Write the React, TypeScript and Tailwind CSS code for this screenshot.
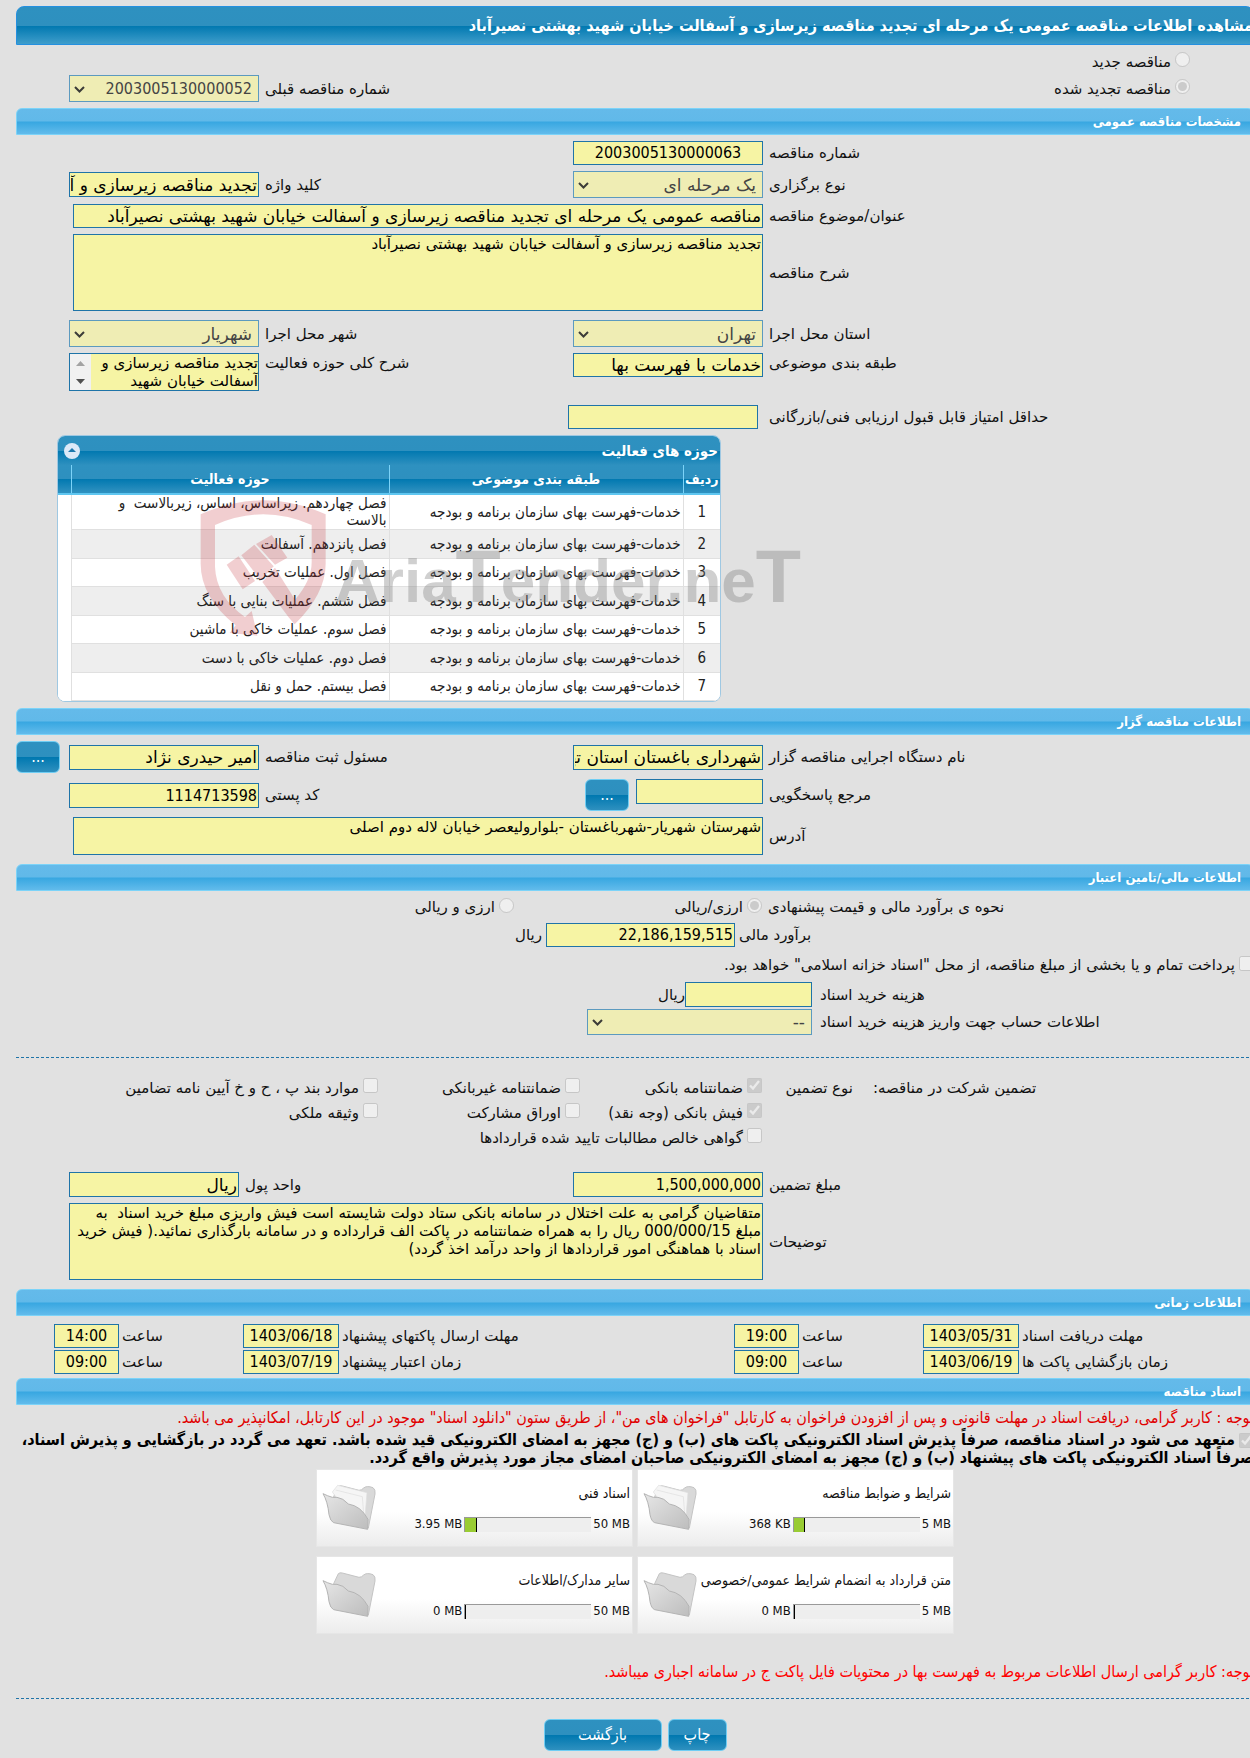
import type { ReactNode } from "react";

const titleGrad = "bg-[linear-gradient(to_bottom,#2e91c0_0%,#2e90bf_50%,#0078b0_51%,#3f9dcb_100%)]";
const headGrad  = "bg-[linear-gradient(to_bottom,#2e91c0_0%,#2e90bf_50%,#0078b0_51%,#2e90bf_100%)]";
const barGrad   = "bg-[linear-gradient(to_bottom,#64baea_0%,#61b9e9_48%,#38a7e1_52%,#62bbeb_100%)]";

const wide      = "font-['DejaVu_Sans',sans-serif]";
const condensed = "font-['DejaVu_Sans_Condensed','DejaVu_Sans',sans-serif]";

const fieldBase = "block w-full rounded-none border border-[#1f74a8] bg-[#f6f4a4] px-px text-black outline-none";
const formGrid  = "grid grid-cols-[1fr_190px_302px_190px] items-center gap-x-1.5 pl-[69px]";
const moneyGrid = "grid grid-cols-[1fr_225px_563px] items-center gap-x-2 pl-4";

type FieldProps = { id: string; value?: string; className?: string; digits?: boolean };

function Label({ id, children }: { id: string; children: ReactNode }) {
  return <label htmlFor={id} className="text-end whitespace-nowrap">{children}</label>;
}

function TextField({ id, value = "", className = "h-[25px]", digits = false }: FieldProps) {
  return (
    <input id={id} type="text" readOnly defaultValue={value} dir={digits ? "ltr" : "rtl"}
      className={`${fieldBase} ${digits ? `text-right text-base ${condensed}` : `text-[17px] ${wide}`} ${className}`} />
  );
}

function CenteredField({ id, value }: FieldProps) {
  return (
    <input id={id} type="text" readOnly defaultValue={value} dir="ltr"
      className={`${fieldBase} h-6 text-center text-base ${condensed}`} />
  );
}

function TextArea({ id, value = "", className = "" }: FieldProps) {
  return (
    <textarea id={id} readOnly defaultValue={value}
      className={`${fieldBase} resize-none overflow-hidden text-[15px] leading-[18px] ${className}`} />
  );
}

function SelectField({ id, value = "", className = "h-[27px]", digits = false }: FieldProps) {
  return (
    <div className="relative">
      <select id={id} disabled defaultValue={value}
        className={`block w-full appearance-none rounded-none border border-[#5c9abf] bg-[#efedb4] ps-1.5 pe-6 text-[#444] ${digits ? `text-base ${condensed}` : `text-[17px] ${wide}`} ${className}`}>
        <option value={value}>{value}</option>
      </select>
      <svg className="pointer-events-none absolute top-1/2 left-1 -translate-y-1/2" width="13" height="13" viewBox="0 0 13 13"
        fill="none" stroke="#3c3c38" strokeWidth="2">
        <path d="M2 4.5 L6.5 9 L11 4.5" />
      </svg>
    </div>
  );
}

function Tick({ type, name, id, label, checked = false, className = "" }: {
  type: "radio" | "checkbox"; name?: string; id: string; label: string; checked?: boolean; className?: string;
}) {
  return (
    <div className={`flex items-center gap-1 whitespace-nowrap ${className}`}>
      <input id={id} name={name} type={type} disabled defaultChecked={checked} className="mb-1 size-[15px] shrink-0" />
      <label htmlFor={id}>{label}</label>
    </div>
  );
}

function SectionBar({ title }: { title: string }) {
  return (
    <h2 className={`ml-4 flex h-[27px] items-center rounded-t-md border border-[#7cd3f8] px-3 text-[13px] font-bold text-white ${condensed} ${barGrad}`}>
      {title}
    </h2>
  );
}

function BlueButton({ children, label, className = "" }: { children: ReactNode; label?: string; className?: string }) {
  return (
    <button type="button" aria-label={label}
      className={`h-8 rounded-md border border-[#6fcdf3] text-base text-white ${condensed} ${headGrad} ${className}`}>
      {children}
    </button>
  );
}

const activities = [
  "فصل چهاردهم. زیراساس، اساس، زیربالاست  و بالاست",
  "فصل پانزدهم. آسفالت",
  "فصل اول. عملیات تخریب",
  "فصل ششم. عملیات بنایی با سنگ",
  "فصل سوم. عملیات خاکی با ماشین",
  "فصل دوم. عملیات خاکی با دست",
  "فصل بیستم. حمل و نقل",
];

function Watermark() {
  return (
    <div className="pointer-events-none absolute top-[62px] left-[142px] flex items-start" dir="ltr" aria-hidden="true">
      <svg width="128" height="139" viewBox="0 0 384 417" fill="#c4343c" fillOpacity="0.24">
        <path d="M5 52 Q192 -32 380 52 V200 Q380 290 287 382 L270 362 L190 255 L228 212 L288 308 Q338 250 338 195 V84 Q192 20 48 84 V210 Q52 300 138 360 L158 342 L175 416 L92 408 L110 385 Q5 300 5 200 Z" />
        <path d="M83 203 L119 178 L168 252 L131 277 Z" />
        <path d="M127 175 L166 143 L224 208 L185 250 Z" />
        <path d="M171 141 L218 114 L265 182 L228 203 Z" />
      </svg>
      <span className="mt-8 ml-2 font-['Liberation_Sans',sans-serif] text-[62px] leading-[96px] font-bold whitespace-nowrap text-[#777]/35">
        Aria<span className="text-[74px]">T</span>ender.ne<span className="text-[74px]">T</span>
      </span>
    </div>
  );
}

function ActivityTable() {
  return (
    <div className={`relative mr-[533px] ml-[57px] ${condensed}`}>
      <div className="overflow-hidden rounded-lg border border-[#9fc8e2] bg-white">
        <div className={`flex h-[29px] items-center justify-between pr-0.5 pl-1.5 ${headGrad}`}>
          <h3 className="text-[15px] font-bold text-white">حوزه های فعالیت</h3>
          <button type="button" aria-label="بستن" className="flex size-4 items-center justify-center rounded-full bg-[#dce9f8]">
            <svg width="8" height="5" viewBox="0 0 8 5" fill="#1d78ad"><path d="M4 0 L8 4 H0 Z" /></svg>
          </button>
        </div>
        <table className="w-full table-fixed border-collapse">
          <thead>
            <tr className={`h-[29px] border-b-2 border-[#5fc6f0] text-[14px] text-white ${headGrad}`}>
              <th className="w-[37px]">ردیف</th>
              <th className="w-[294px] border-r border-[#7cd3f8]">طبقه بندی موضوعی</th>
              <th className="border-r border-[#7cd3f8]">حوزه فعالیت</th>
              <th className="w-[13px] border-r border-[#7cd3f8]" aria-label="فاصله" />
            </tr>
          </thead>
          <tbody>
            {activities.map((name, i) => (
              <tr key={name} className={`text-[15px] leading-[17px] text-[#222] ${i === 0 ? "h-[35px]" : i % 2 ? "h-[29px]" : "h-[28px]"} ${i % 2 ? "bg-[#eee]" : "bg-white"}`}>
                <td className="border-b border-[#e0e0e0] text-center">{i + 1}</td>
                <td className="border-r border-b border-[#e0e0e0] pr-0.5 whitespace-nowrap">خدمات-فهرست بهای سازمان برنامه و بودجه</td>
                <td className="border-r border-b border-[#e0e0e0] pr-0.5 pl-6 whitespace-pre-wrap">{name}</td>
                <td className="border-r border-[#e0e0e0] bg-white" />
              </tr>
            ))}
          </tbody>
        </table>
      </div>
      <Watermark />
    </div>
  );
}

function Folder({ filled }: { filled: boolean }) {
  return (
    <svg width="57" height="52" viewBox="0 0 171 156" strokeLinejoin="round">
      <defs>
        <linearGradient id="folderFace" x1="0" y1="0" x2="1" y2="1">
          <stop offset="0" stopColor="#e6e6e6" />
          <stop offset="1" stopColor="#bdbdbd" />
        </linearGradient>
      </defs>
      <path d="M38 44 L52 14 Q56 10 64 12 L114 25 Q122 25 128 18 Q138 10 156 17 Q164 22 162 36 L142 138 L60 80 Z"
        fill="#d9d9d9" stroke="#c4c4c4" strokeWidth="3" />
      {filled && (
        <>
          <path d="M34 30 L50 10 L138 32 L132 104 L60 66 Z" fill="#f5f5f5" stroke="#dedede" strokeWidth="2" />
          <path d="M44 24 L124 44 L128 96" fill="none" stroke="#dedede" strokeWidth="2" />
        </>
      )}
      <path d="M6 35 Q20 42 34 46 L48 46 Q66 48 82 66 Q120 72 141 112 L140 142 L38 122 Q28 118 24 98 Q20 58 6 35 Z"
        fill="url(#folderFace)" stroke="#b4b4b4" strokeWidth="3" />
    </svg>
  );
}

const docs = [
  { title: "شرایط و ضوابط مناقصه",                 used: "368 KB",  max: "5 MB",  pct: 9 },
  { title: "اسناد فنی",                            used: "3.95 MB", max: "50 MB", pct: 9 },
  { title: "متن قرارداد به انضمام شرایط عمومی/خصوصی", used: "0 MB",    max: "5 MB",  pct: 0 },
  { title: "سایر مدارک/اطلاعات",                   used: "0 MB",    max: "50 MB", pct: 0 },
];

function DocCard({ title, used, max, pct }: (typeof docs)[number]) {
  return (
    <div className={`flex h-[78px] items-center justify-between border border-[#e6e6e6] bg-[linear-gradient(to_bottom,#fff_55%,#ececec)] pr-0.5 pl-1 ${condensed}`}>
      <div className="flex flex-col gap-3 text-[13px]">
        <span className="text-[14px] leading-5 whitespace-nowrap">{title}</span>
        <div className="flex items-center gap-0.5 leading-[18px]">
          <span dir="ltr">{max}</span>
          <div dir="ltr" className="h-[15px] w-[127px] border-t border-l border-[#999] bg-[#eee]">
            <div className="h-full border-r border-black bg-[#99cc33]" style={{ width: `${pct}%` }} />
          </div>
          <span dir="ltr">{used}</span>
        </div>
      </div>
      <Folder filled={pct > 0} />
    </div>
  );
}

const dates = [
  ["مهلت دریافت اسناد", "1403/05/31", "19:00", "مهلت ارسال پاکتهای پیشنهاد", "1403/06/18", "14:00"],
  ["زمان بازگشایی پاکت ها", "1403/06/19", "09:00", "زمان اعتبار پیشنهاد", "1403/07/19", "09:00"],
];

export default function App() {
  return (
    <div dir="rtl" className={`min-h-screen overflow-hidden bg-[#e1e1e1] text-[15px] leading-5 text-[#111] ${wide}`}>
      <main className="-mr-1 pt-1.5 pb-2">
        <h1 className={`ml-4 flex h-[39px] items-center rounded-t-lg border border-[#2490e0] text-base font-bold whitespace-nowrap text-white ${condensed} ${titleGrad}`}>
          مشاهده اطلاعات مناقصه عمومی یک مرحله ای تجدید مناقصه زیرسازی و آسفالت خیابان شهید بهشتی نصیرآباد
        </h1>

        <div className="pt-[3px] pb-1.5">
          <Tick type="radio" name="kind" id="kindNew" label="مناقصه جدید" className="h-[27px] pr-16" />
          <div className="grid grid-cols-[1fr_190px] items-center gap-x-1.5 pl-[69px]">
            <div className="flex items-center justify-between">
              <Tick type="radio" name="kind" id="kindRenewed" label="مناقصه تجدید شده" checked className="pr-16" />
              <Label id="prevNo">شماره مناقصه قبلی</Label>
            </div>
            <SelectField id="prevNo" value="2003005130000052" digits />
          </div>
        </div>

        {/* Tender details */}
        <SectionBar title="مشخصات مناقصه عمومی" />
        <div className="flex flex-col gap-1.5 py-1.5">
          <div className={formGrid}>
            <Label id="tenderNo">شماره مناقصه</Label>
            <CenteredField id="tenderNo" value="2003005130000063" />
          </div>
          <div className={formGrid}>
            <Label id="method">نوع برگزاری</Label>
            <SelectField id="method" value="یک مرحله ای" />
            <Label id="keyword">کلید واژه</Label>
            <TextField id="keyword" value="تجدید مناقصه زیرسازی و آسفالت خیابان شهید بهشتی" />
          </div>
          <div className={formGrid}>
            <Label id="subject">عنوان/موضوع مناقصه</Label>
            <div className="col-span-3 pl-1">
              <TextField id="subject" className="h-6"
                value="مناقصه عمومی یک مرحله ای تجدید مناقصه زیرسازی و آسفالت خیابان شهید بهشتی نصیرآباد" />
            </div>
          </div>
          <div className={formGrid}>
            <Label id="desc">شرح مناقصه</Label>
            <div className="col-span-3 pl-1">
              <TextArea id="desc" className="h-[77px]" value="تجدید مناقصه زیرسازی و آسفالت خیابان شهید بهشتی نصیرآباد" />
            </div>
          </div>
          <div className={`${formGrid} pt-[3px]`}>
            <Label id="province">استان محل اجرا</Label>
            <SelectField id="province" value="تهران" />
            <Label id="city">شهر محل اجرا</Label>
            <SelectField id="city" value="شهریار" />
          </div>
          <div className="grid grid-cols-[1fr_190px_302px_190px] items-start gap-x-1.5 pl-[69px]">
            <Label id="category">طبقه بندی موضوعی</Label>
            <TextField id="category" value="خدمات با فهرست بها" className="h-6" />
            <Label id="scope">شرح کلی حوزه فعالیت</Label>
            <div className="flex h-[38px] border border-[#1f74a8] bg-[#f6f4a4]">
              <textarea id="scope" readOnly defaultValue="تجدید مناقصه زیرسازی و آسفالت خیابان شهید بهشتی"
                className="block h-full min-w-0 flex-1 resize-none overflow-hidden bg-transparent text-[15px] leading-[18px] text-black outline-none" />
              <div className="flex w-[21px] flex-col items-center justify-around bg-[#f1f1f1]">
                <svg width="9" height="5" viewBox="0 0 9 5" fill="#a3a3a3"><path d="M0 5 L4.5 0 L9 5 Z" /></svg>
                <svg width="9" height="5" viewBox="0 0 9 5" fill="#505050"><path d="M0 0 L4.5 5 L9 0 Z" /></svg>
              </div>
            </div>
          </div>
          <div className="grid grid-cols-[1fr_190px] items-center gap-x-[11px] pt-2 pl-[568px]">
            <Label id="minScore">حداقل امتیاز قابل قبول ارزیابی فنی/بازرگانی</Label>
            <TextField id="minScore" className="h-6" />
          </div>
          <ActivityTable />
        </div>

        {/* Tender holder */}
        <SectionBar title="اطلاعات مناقصه گزار" />
        <div className="flex flex-col gap-1.5 pt-1.5 pb-[9px]">
          <div className="grid grid-cols-[1fr_190px_302px_190px_47px] items-center gap-x-1.5 pl-4">
            <Label id="agency">نام دستگاه اجرایی مناقصه گزار</Label>
            <TextField id="agency" value="شهرداری باغستان استان تهران" />
            <Label id="registrar">مسئول ثبت مناقصه</Label>
            <TextField id="registrar" value="امیر حیدری نژاد" />
            <BlueButton label="جستجوی مسئول" className="w-11 justify-self-end">...</BlueButton>
          </div>
          <div className={formGrid}>
            <Label id="contact">مرجع پاسخگویی</Label>
            <div className="flex gap-[7px]">
              <TextField id="contact" className="h-[25px] max-w-[127px]" />
              <BlueButton label="جستجوی مرجع" className="w-11 shrink-0">...</BlueButton>
            </div>
            <Label id="postal">کد پستی</Label>
            <TextField id="postal" value="1114713598" digits />
          </div>
          <div className={formGrid}>
            <Label id="address">آدرس</Label>
            <div className="col-span-3 pl-1">
              <TextArea id="address" className="h-[38px]" value="شهرستان شهریار-شهرباغستان -بلوارولیعصر خیابان لاله دوم اصلی" />
            </div>
          </div>
        </div>

        {/* Finance */}
        <SectionBar title="اطلاعات مالی/تامین اعتبار" />
        <div className="pt-[5px]">
          <div className="grid h-[22px] grid-cols-[1fr_242px_514px] items-center gap-x-1.5">
            <span className="text-end">نحوه ی برآورد مالی و قیمت پیشنهادی</span>
            <Tick type="radio" name="currency" id="curOne" label="ارزی/ریالی" checked />
            <Tick type="radio" name="currency" id="curBoth" label="ارزی و ریالی" />
          </div>
          <div className="mt-[5px] grid grid-cols-[1fr_189px_526px] items-center gap-x-1 pl-4">
            <Label id="estimate">برآورد مالی</Label>
            <TextField id="estimate" value="22,186,159,515" digits className="h-6" />
            <span>ریال</span>
          </div>
          <Tick type="checkbox" id="treasury" className="mt-2 h-5"
            label={'پرداخت تمام و یا بخشی از مبلغ مناقصه، از محل "اسناد خزانه اسلامی" خواهد بود.'} />
          <div className={`${moneyGrid} mt-[7px]`}>
            <Label id="docFee">هزینه خرید اسناد</Label>
            <div className="flex items-center">
              <TextField id="docFee" className="h-[25px] max-w-[127px]" />
              <span>ریال</span>
            </div>
          </div>
          <div className={`${moneyGrid} mt-0.5`}>
            <Label id="account">اطلاعات حساب جهت واریز هزینه خرید اسناد</Label>
            <SelectField id="account" value="--" className="h-[26px]" />
          </div>
        </div>

        <hr className="mt-[22px] ml-4 border-t border-dashed border-[#1f74a8]" />

        <div className="grid grid-cols-[1fr_91px_182px_202px_378px] items-center pt-[17px]">
          <span className="pl-5 text-end">تضمین شرکت در مناقصه:</span>
          <span className="whitespace-nowrap">نوع تضمین</span>
          <Tick type="checkbox" id="g1" label="ضمانتنامه بانکی" checked className="h-[25px]" />
          <Tick type="checkbox" id="g2" label="ضمانتنامه غیربانکی" />
          <Tick type="checkbox" id="g3" label="موارد بند پ ، ح و خ آیین نامه تضامین" />
          <Tick type="checkbox" id="g4" label="فیش بانکی (وجه نقد)" checked className="col-start-3 h-[25px]" />
          <Tick type="checkbox" id="g5" label="اوراق مشارکت" />
          <Tick type="checkbox" id="g6" label="وثیقه ملکی" />
          <Tick type="checkbox" id="g7" label="گواهی خالص مطالبات تایید شده قراردادها" className="col-span-2 col-start-3 h-[25px]" />
        </div>

        <div className="flex flex-col gap-1.5 pt-[22px] pb-[9px]">
          <div className="grid grid-cols-[1fr_190px_322px_170px] items-center gap-x-1.5 pl-[69px]">
            <Label id="amount">مبلغ تضمین</Label>
            <TextField id="amount" value="1,500,000,000" digits />
            <Label id="unit">واحد پول</Label>
            <TextField id="unit" value="ریال" />
          </div>
          <div className={formGrid}>
            <Label id="notes">توضیحات</Label>
            <TextArea id="notes" className="col-span-3 h-[77px]"
              value="متقاضیان گرامی به علت اختلال در سامانه بانکی ستاد دولت شایسته است فیش واریزی مبلغ خرید اسناد  به مبلغ 000/000/15 ریال را به همراه ضمانتنامه در پاکت الف قرارداده و در سامانه بارگذاری نمائید.( فیش خرید اسناد با هماهنگی امور قراردادها از واحد درآمد اخذ گردد)" />
          </div>
        </div>

        {/* Schedule */}
        <SectionBar title="اطلاعات زمانی" />
        <div className="flex flex-col gap-0.5 pt-2 pb-1">
          {dates.map(([l1, d1, t1, l2, d2, t2], i) => (
            <div key={i} className="grid grid-cols-[1fr_96px_118px_65px_389px_96px_118px_65px] items-center gap-x-[3px] pl-[54px]">
              <Label id={`dateA${i}`}>{l1}</Label>
              <CenteredField id={`dateA${i}`} value={d1} />
              <Label id={`timeA${i}`}>ساعت</Label>
              <CenteredField id={`timeA${i}`} value={t1} />
              <Label id={`dateB${i}`}>{l2}</Label>
              <CenteredField id={`dateB${i}`} value={d2} />
              <Label id={`timeB${i}`}>ساعت</Label>
              <CenteredField id={`timeB${i}`} value={t2} />
            </div>
          ))}
        </div>

        {/* Documents */}
        <SectionBar title="اسناد مناقصه" />
        <p className={`text-base leading-[26px] whitespace-nowrap text-[#e00000] ${condensed}`}>
          توجه : کاربر گرامی، دریافت اسناد در مهلت قانونی و پس از افزودن فراخوان به کارتابل "فراخوان های من"، از طریق ستون "دانلود اسناد" موجود در این کارتابل، امکانپذیر می باشد.
        </p>
        <div className={`ml-4 text-base leading-[18px] font-bold text-black ${condensed}`}>
          <input id="pledge" type="checkbox" disabled defaultChecked className="ml-1 size-[15px] align-middle" />
          <label htmlFor="pledge">
            متعهد می شود در اسناد مناقصه، صرفاً پذیرش اسناد الکترونیکی پاکت های (ب) و (ج) مجهز به امضای الکترونیکی قید شده باشد. تعهد می گردد در بازگشایی و پذیرش اسناد، صرفاً اسناد الکترونیکی پاکت های پیشنهاد (ب) و (ج) مجهز به امضای الکترونیکی صاحبان امضای مجاز مورد پذیرش واقع گردد.
          </label>
        </div>
        <div className="mt-0.5 grid grid-cols-[317px_317px] justify-center gap-x-1 gap-y-[9px] pl-4">
          {docs.map(d => <DocCard key={d.title} {...d} />)}
        </div>
        <p className={`mt-7 text-base leading-5 text-[#ff0000] ${condensed}`}>
          توجه: کاربر گرامی ارسال اطلاعات مربوط به فهرست بها در محتویات فایل پاکت ج در سامانه اجباری میباشد.
        </p>

        <hr className="mt-4 ml-4 border-t border-dashed border-[#1f74a8]" />
        <div className="mt-5 flex justify-center gap-1.5 pl-4">
          <BlueButton className="w-[59px]">چاپ</BlueButton>
          <BlueButton className="w-[118px]">بازگشت</BlueButton>
        </div>
      </main>
    </div>
  );
}
